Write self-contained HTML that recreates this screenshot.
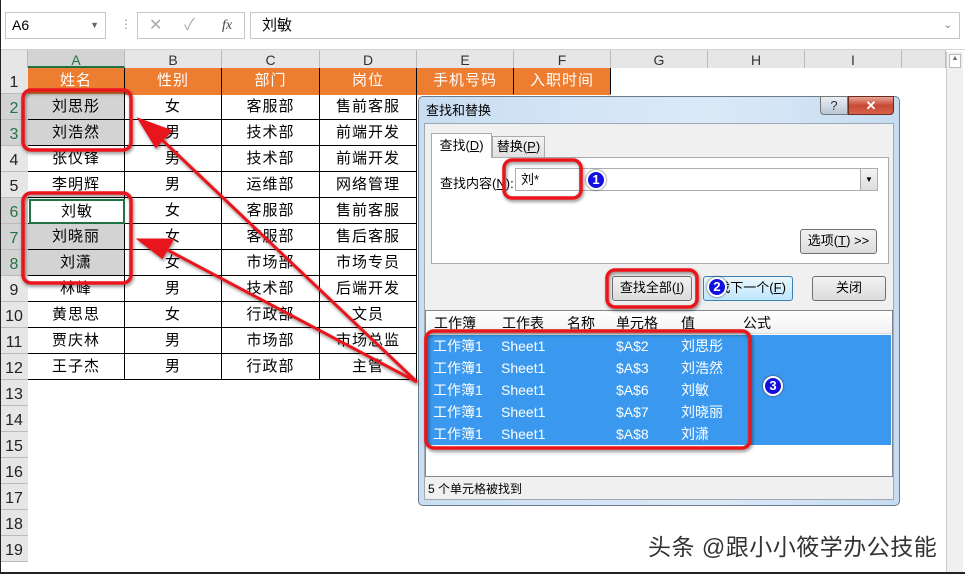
<!DOCTYPE html>
<html><head><meta charset="utf-8"><style>
*{margin:0;padding:0;box-sizing:border-box}
body{width:965px;height:574px;overflow:hidden;background:#fff;font-family:"Liberation Sans","Noto Sans CJK SC",sans-serif;position:relative}
.a{position:absolute}
.c{position:absolute;text-align:center;font-size:15px;color:#000;line-height:26px;letter-spacing:1px}
.rh{position:absolute;left:0;width:28px;background:#e6e6e6;border-bottom:1px solid #bbb;font-size:16px;color:#222;text-align:center;line-height:30px;height:26px}
.ch{position:absolute;top:50px;height:18px;background:#e6e6e6;border-right:1px solid #bbb;font-size:14px;color:#333;text-align:center;line-height:20px}
.btn{position:absolute;border:1px solid #707070;border-radius:3px;background:linear-gradient(#f2f2f2,#dcdcdc);font-size:13px;text-align:center;line-height:22px;color:#000}
.row{position:absolute;left:426px;width:465px;height:22px;background:#3a99ef;color:#fff;font-size:14px;line-height:22px}
.row span{position:absolute}
.badge{position:absolute;width:20px;height:20px;border-radius:50%;background:#1010e0;border:2px solid #fff;box-shadow:0 0 2px #333;color:#fff;font-size:13px;font-weight:bold;text-align:center;line-height:16px}
</style></head><body>
<div class="a" style="left:0;top:0;width:965px;height:50px;background:#fff;border-bottom:1px solid #d4d4d4"></div>
<div class="a" style="left:5px;top:12px;width:101px;height:27px;border:1px solid #c6c6c6;font-size:14px;line-height:25px;padding-left:6px">A6<span style="position:absolute;right:6px;top:0;font-size:9px;color:#666">▼</span></div>
<div class="a" style="left:120px;top:17px;color:#999;font-size:12px">⋮</div>
<div class="a" style="left:137px;top:12px;width:108px;height:27px;border:1px solid #c6c6c6;color:#aaa;font-size:16px;line-height:25px"><span style="position:absolute;left:11px">✕</span><span style="position:absolute;left:46px">✓</span><span style="position:absolute;left:84px;color:#444;font-style:italic;font-family:'Liberation Serif';font-size:14px">fx</span></div>
<div class="a" style="left:250px;top:12px;width:710px;height:27px;border:1px solid #c6c6c6;font-size:15px;line-height:25px;padding-left:11px">刘敏<span style="position:absolute;right:7px;color:#777;font-size:10px">⌄</span></div>

<div class="a" style="left:0;top:50px;width:28px;height:18px;background:#e6e6e6;border-right:1px solid #bbb"></div>
<div class="ch" style="left:28px;width:97px;background:#d3d3d3;border-bottom:2px solid #217346;color:#217346">A</div>
<div class="ch" style="left:125px;width:97px">B</div>
<div class="ch" style="left:222px;width:98px">C</div>
<div class="ch" style="left:320px;width:97px">D</div>
<div class="ch" style="left:417px;width:97px">E</div>
<div class="ch" style="left:514px;width:97px">F</div>
<div class="ch" style="left:611px;width:97px">G</div>
<div class="ch" style="left:708px;width:97px">H</div>
<div class="ch" style="left:805px;width:97px">I</div>
<div class="ch" style="left:902px;width:44px"></div>
<div class="a" style="left:946px;top:52px;width:17px;height:520px;background:#f0f0f0;border-left:1px solid #ccc"><div style="margin:2px;height:14px;border:1px solid #bbb;background:#fff;font-size:7px;text-align:center;color:#666">▲</div></div>

<div id="rh"></div>
<div class="a" style="left:28px;top:68px;width:583px;height:27px;background:#ed7d31"></div>
<div id="grid"></div>
<div class="a" style="left:0;top:572px;width:965px;height:2px;background:#222"></div>
<div class="a" style="left:0;top:0;width:1px;height:574px;background:#222"></div>

<script>
var rh='';for(var i=1;i<=19;i++){var t=68+26*(i-1);rh+='<div class="rh" style="top:'+t+'px;'+((i>=2&&i<=3)||(i>=6&&i<=8)?'background:#d3d3d3;color:#217346;':'')+'">'+i+'</div>';}
document.getElementById('rh').innerHTML=rh;
var d=[["姓名","性别","部门","岗位","手机号码","入职时间"],["刘思彤","女","客服部","售前客服"],["刘浩然","男","技术部","前端开发"],["张仪锋","男","技术部","前端开发"],["李明辉","男","运维部","网络管理"],["刘敏","女","客服部","售前客服"],["刘晓丽","女","客服部","售后客服"],["刘潇","女","市场部","市场专员"],["林峰","男","技术部","后端开发"],["黄思思","女","行政部","文员"],["贾庆林","男","市场部","市场总监"],["王子杰","男","行政部","主管"]];
var xs=[28,125,222,320,417,514,611];var g='';
for(var r=0;r<d.length;r++){var t=68+26*r;for(var c=0;c<d[r].length;c++){var bg='';var col='#000';
if(r==0){col='#fff';}
else if(c==0&&(r==1||r==2||r==6||r==7))bg='background:#d3d3d3;';
g+='<div class="c" style="left:'+xs[c]+'px;top:'+t+'px;width:'+(xs[c+1]-xs[c])+'px;height:26px;'+bg+'color:'+col+';border-right:1px solid #000;'+(r>0?'border-bottom:1px solid #000;':'')+'">'+d[r][c]+'</div>';}}
g+='<div class="a" style="left:29px;top:199px;width:96px;height:25px;border:2px solid #217346;background:#fff;text-align:center;font-size:15px;line-height:22px;letter-spacing:1px">刘敏</div>';
document.getElementById('grid').innerHTML=g;
</script>

<!-- dialog -->
<div class="a" style="left:418px;top:96px;width:482px;height:410px;border:1px solid #6d7a8a;border-radius:5px;background:linear-gradient(90deg,#c9def3,#dbe9f7 60%,#c5dcf2);"></div>
<div class="a" style="left:426px;top:100px;font-size:13px;color:#000">查找和替换</div>
<div class="a" style="left:820px;top:96px;width:28px;height:19px;border:1px solid #777;border-radius:0 0 0 4px;background:linear-gradient(#e8eef5,#b9c6d6);text-align:center;font-size:13px;line-height:18px;color:#333">?</div>
<div class="a" style="left:848px;top:96px;width:46px;height:19px;border:1px solid #6b2a20;border-radius:0 0 4px 0;background:linear-gradient(#e8a596,#c74a35 50%,#d8624a);text-align:center;color:#fff;font-weight:bold;font-size:13px;line-height:18px">✕</div>
<div class="a" style="left:424px;top:123px;width:470px;height:377px;background:#f0f0f0;border:1px solid #a0a8b4"></div>
<div class="a" style="left:431px;top:157px;width:458px;height:107px;background:#fff;border:1px solid #aaa"></div>
<div class="a" style="left:431px;top:133px;width:61px;height:25px;background:#fff;border:1px solid #aaa;border-bottom:none;font-size:13px;line-height:24px;text-align:center">查找(<u>D</u>)</div>
<div class="a" style="left:492px;top:136px;width:53px;height:21px;background:linear-gradient(#f4f4f4,#e0e0e0);border:1px solid #aaa;border-bottom:none;font-size:13px;line-height:20px;text-align:center">替换(<u>P</u>)</div>
<div class="a" style="left:440px;top:173px;font-size:13px">查找内容(<u>N</u>):</div>
<div class="a" style="left:515px;top:168px;width:363px;height:23px;border:1px solid #abadb3;background:#fff;font-size:13px;line-height:21px;padding-left:5px">刘*</div>
<div class="a" style="left:860px;top:169px;width:17px;height:21px;border-left:1px solid #aaa;background:linear-gradient(#f3f3f3,#ddd);font-size:8px;text-align:center;line-height:21px">▼</div>
<div class="btn" style="left:800px;top:229px;width:77px;height:25px">选项(<u>T</u>) &gt;&gt;</div>
<div class="btn" style="left:612px;top:276px;width:80px;height:25px">查找全部(<u>I</u>)</div>
<div class="btn" style="left:703px;top:276px;width:90px;height:25px;border-color:#3c7fb1;background:linear-gradient(#eaf6fd,#bee6fd)">&nbsp;&nbsp;找下一个(<u>F</u>)</div>
<div class="btn" style="left:812px;top:276px;width:74px;height:25px">关闭</div>
<div class="a" style="left:425px;top:310px;width:468px;height:167px;background:#fff;border:1px solid #828790"></div>
<div class="a" style="left:426px;top:311px;width:466px;height:23px;background:linear-gradient(#fff,#f1f2f4);border-bottom:1px solid #ddd;font-size:14px;line-height:24px">
<span class="a" style="left:8px">工作簿</span><span class="a" style="left:76px">工作表</span><span class="a" style="left:141px">名称</span><span class="a" style="left:190px">单元格</span><span class="a" style="left:255px">值</span><span class="a" style="left:317px">公式</span></div>
<div id="rows"></div>
<script>
var v=[["$A$2","刘思彤"],["$A$3","刘浩然"],["$A$6","刘敏"],["$A$7","刘晓丽"],["$A$8","刘潇"]];var h='';
for(var i=0;i<5;i++){h+='<div class="row" style="top:'+(335+22*i)+'px"><span style="left:7px">工作簿1</span><span style="left:75px">Sheet1</span><span style="left:190px">'+v[i][0]+'</span><span style="left:255px">'+v[i][1]+'</span></div>';}
document.getElementById('rows').innerHTML=h;
</script>
<div class="a" style="left:425px;top:478px;width:468px;height:22px;font-size:12px;line-height:22px;padding-left:3px">5 个单元格被找到</div>

<svg class="a" style="left:0;top:0" width="965" height="574">
<defs><filter id="s"><feDropShadow dx="1" dy="2" stdDeviation="1.5" flood-color="#000" flood-opacity="0.45"/></filter></defs>
<g fill="none" stroke="#e8141a" stroke-width="3.5" filter="url(#s)">
<rect x="23" y="90" width="108" height="60" rx="8"/>
<rect x="23" y="193" width="108" height="90" rx="8"/>
<rect x="504" y="160" width="77" height="38" rx="8"/>
<rect x="607" y="270" width="90" height="37" rx="8"/>
<rect x="426" y="331" width="324" height="117" rx="8"/>
</g>
<g stroke="#e8141a" stroke-width="3" filter="url(#s)" fill="#e8141a">
<line x1="417" y1="382" x2="158" y2="136"/>
<path d="M140 120L170 131L156 146z"/>
<line x1="417" y1="382" x2="160" y2="246"/>
<path d="M140 240L172 240L162 257z"/>
</g>
</svg>
<div class="badge" style="left:586px;top:170px">1</div>
<div class="badge" style="left:707px;top:277px">2</div>
<div class="badge" style="left:763px;top:376px">3</div>
<div class="a" style="left:648px;top:528px;font-size:23px;letter-spacing:0.5px;color:#333;text-shadow:0 0 2px #fff,1px 1px 2px #fff">头条 @跟小小筱学办公技能</div>
</body></html>
